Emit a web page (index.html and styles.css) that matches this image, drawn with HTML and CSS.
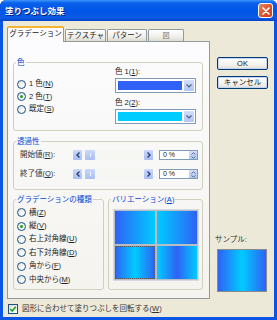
FILE: index.html
```html
<!DOCTYPE html>
<html lang="ja">

<head>
    <meta charset="UTF-8">
    <title>塗りつぶし効果</title>
    <link rel="stylesheet" href="styles.css">
</head>

<body>
    <div class="window">
        <div class="titlebar">
            <span class="title">塗りつぶし効果</span>
            <span class="close-btn">
                <svg width="8" height="8" viewBox="0 0 8 8"><path d="M1 1L7 7M7 1L1 7" stroke="#fff" stroke-width="1.6" stroke-linecap="round"/></svg>
            </span>
        </div>

        <div class="client">
            <div class="main">
                <div class="left">
                    <div class="tabs">
                        <div class="tab active">グラデーション</div>
                        <div class="tab">テクスチャ</div>
                        <div class="tab">パターン</div>
                        <div class="tab tab-pic">図</div>
                    </div>

                    <div class="panel">
                        <fieldset class="group color-group">
                            <legend>色</legend>
                            <div class="color-body">
                                <div class="radio-list">
                                    <label class="radio"><span class="radio-dot"></span><span>1 色(<u>N</u>)</span></label>
                                    <label class="radio"><span class="radio-dot checked"></span><span>2 色(<u>T</u>)</span></label>
                                    <label class="radio"><span class="radio-dot"></span><span>既定(<u>S</u>)</span></label>
                                </div>
                                <div class="pickers">
                                    <div class="field-label">色 1(<u>1</u>):</div>
                                    <div class="dropdown">
                                        <span class="swatch swatch-blue"></span>
                                        <span class="dd-btn"><svg width="6" height="4" viewBox="0 0 6 4"><path d="M0.5 0.5L3 3L5.5 0.5" fill="none" stroke="#4d6185" stroke-width="1.2"/></svg></span>
                                    </div>
                                    <div class="field-label second">色 2(<u>2</u>):</div>
                                    <div class="dropdown">
                                        <span class="swatch swatch-cyan"></span>
                                        <span class="dd-btn"><svg width="6" height="4" viewBox="0 0 6 4"><path d="M0.5 0.5L3 3L5.5 0.5" fill="none" stroke="#4d6185" stroke-width="1.2"/></svg></span>
                                    </div>
                                </div>
                            </div>
                        </fieldset>

                        <fieldset class="group alpha-group">
                            <legend>透過性</legend>
                            <div class="alpha-body">
                                <div class="alpha-row">
                                    <span class="row-label">開始値(<u>R</u>):</span>
                                    <div class="slider">
                                        <span class="sb-btn"><svg width="4" height="6" viewBox="0 0 4 6"><path d="M3.5 0.5L1 3L3.5 5.5" fill="none" stroke="#2c3f6b" stroke-width="1.4"/></svg></span>
                                        <span class="track"><span class="thumb"></span></span>
                                        <span class="sb-btn"><svg width="4" height="6" viewBox="0 0 4 6"><path d="M0.5 0.5L3 3L0.5 5.5" fill="none" stroke="#2c3f6b" stroke-width="1.4"/></svg></span>
                                    </div>
                                    <div class="spin">
                                        <span class="spin-text">0 %</span>
                                        <span class="spin-btn"><svg width="5" height="7" viewBox="0 0 5 7"><path d="M0.5 2.5L2.5 0.8L4.5 2.5M0.5 4.5L2.5 6.2L4.5 4.5" fill="none" stroke="#4d6185" stroke-width="0.9"/></svg></span>
                                    </div>
                                </div>
                                <div class="alpha-row">
                                    <span class="row-label">終了値(<u>Q</u>):</span>
                                    <div class="slider">
                                        <span class="sb-btn"><svg width="4" height="6" viewBox="0 0 4 6"><path d="M3.5 0.5L1 3L3.5 5.5" fill="none" stroke="#2c3f6b" stroke-width="1.4"/></svg></span>
                                        <span class="track"><span class="thumb"></span></span>
                                        <span class="sb-btn"><svg width="4" height="6" viewBox="0 0 4 6"><path d="M0.5 0.5L3 3L0.5 5.5" fill="none" stroke="#2c3f6b" stroke-width="1.4"/></svg></span>
                                    </div>
                                    <div class="spin">
                                        <span class="spin-text">0 %</span>
                                        <span class="spin-btn"><svg width="5" height="7" viewBox="0 0 5 7"><path d="M0.5 2.5L2.5 0.8L4.5 2.5M0.5 4.5L2.5 6.2L4.5 4.5" fill="none" stroke="#4d6185" stroke-width="0.9"/></svg></span>
                                    </div>
                                </div>
                            </div>
                        </fieldset>

                        <div class="bottom-groups">
                            <fieldset class="group type-group">
                                <legend>グラデーションの種類</legend>
                                <div class="type-list">
                                    <label class="radio"><span class="radio-dot"></span><span>横(<u>Z</u>)</span></label>
                                    <label class="radio"><span class="radio-dot checked"></span><span>縦(<u>V</u>)</span></label>
                                    <label class="radio"><span class="radio-dot"></span><span>右上対角線(<u>U</u>)</span></label>
                                    <label class="radio"><span class="radio-dot"></span><span>右下対角線(<u>D</u>)</span></label>
                                    <label class="radio"><span class="radio-dot"></span><span>角から(<u>F</u>)</span></label>
                                    <label class="radio"><span class="radio-dot"></span><span>中央から(<u>M</u>)</span></label>
                                </div>
                            </fieldset>

                            <fieldset class="group variation-group">
                                <legend>バリエーション(<u>A</u>)</legend>
                                <div class="tiles">
                                    <span class="tile tile-1"></span>
                                    <span class="tile tile-2"></span>
                                    <span class="tile tile-3 selected"></span>
                                    <span class="tile tile-4"></span>
                                </div>
                            </fieldset>
                        </div>
                    </div>
                </div>

                <div class="side">
                    <button class="btn">OK</button>
                    <button class="btn">キャンセル</button>
                    <div class="sample-label">サンプル:</div>
                    <div class="sample"></div>
                </div>
            </div>

            <label class="check-row">
                <span class="checkbox"><svg width="8" height="8" viewBox="0 0 8 8"><path d="M1.2 4L3.2 6L6.8 1.8" fill="none" stroke="#21a121" stroke-width="1.6"/></svg></span>
                <span>図形に合わせて塗りつぶしを回転する(<u>W</u>)</span>
            </label>
        </div>
    </div>
</body>

</html>
```

FILE: styles.css
```css
body,
html {
    margin: 0;
    padding: 0;
    background: #ffffff;
}

.window {
    width: 277px;
    height: 320px;
    box-sizing: border-box;
    display: flex;
    flex-direction: column;
    background: #0a55e3;
    border-radius: 6px 6px 0 0;
    padding: 0 3px 3px;
    font-family: "Liberation Sans", "Noto Sans CJK JP", sans-serif;
    font-size: 7.5px;
    line-height: 10px;
    color: #222222;
}

/* title bar */
.titlebar {
    height: 21px;
    margin: 0 -3px;
    padding: 0 5px 0 5px;
    display: flex;
    align-items: center;
    justify-content: space-between;
    border-radius: 6px 6px 0 0;
    background: linear-gradient(to bottom, #3d95ff 0%, #0a61ea 14%, #0055e8 50%, #0a5ae4 85%, #0842c8 100%);
}

.title {
    color: #ffffff;
    font-weight: bold;
    font-size: 8.5px;
    text-shadow: 1px 1px 0 #0a1e80;
}

.close-btn {
    width: 13px;
    height: 13px;
    display: flex;
    align-items: center;
    justify-content: center;
    border: 1px solid #ffffff;
    border-radius: 3px;
    background: linear-gradient(135deg, #e7865f, #d9532e 55%, #c8401e);
    margin-right: -1px;
}

/* dialog body */
.client {
    flex: 1;
    background: #ece9d8;
    padding: 5px 0 0 4px;
    display: flex;
    flex-direction: column;
}

.main {
    display: flex;
}

.left {
    width: 203px;
}

.tabs {
    display: flex;
    align-items: flex-end;
    height: 15px;
}

.tab {
    height: 12px;
    box-sizing: border-box;
    border: 1px solid #919b9c;
    border-bottom: none;
    border-radius: 2px 2px 0 0;
    background: linear-gradient(to bottom, #ffffff, #ecebe6 70%, #dcdad0);
    text-align: center;
    line-height: 11px;
    color: #222222;
    margin-right: 1px;
}

.tab:nth-child(1) { width: 57px; }
.tab:nth-child(2) { width: 41px; }
.tab:nth-child(3) { width: 40px; }
.tab:nth-child(4) { width: 36px; }

.tab.active {
    background: #fcfcfe;
    border-top: 2px solid #f5b431;
    line-height: 12px;
    position: relative;
    z-index: 1;
    margin-bottom: -1px;
    height: 16px;
}

.tab-pic {
    color: #777777;
    font-size: 7px;
}

.panel {
    height: 258px;
    box-sizing: border-box;
    border: 1px solid #919b9c;
    background: linear-gradient(to bottom, #fcfcfe, #f4f3ee);
    padding: 16px 6px 0 5px;
}

/* group boxes */
.group {
    margin: 0;
    padding: 0;
    min-width: 0;
    border: 1px solid #d0d0bf;
    border-radius: 3px;
}

.group legend {
    margin-left: 2px;
    padding: 0 1px;
    line-height: 9px;
    color: #0046d5;
}

.color-body {
    display: flex;
    height: 63px;
}

.radio-list {
    width: 98px;
    padding: 11px 0 0 3px;
}

.radio {
    display: flex;
    align-items: center;
    height: 12.5px;
    gap: 3px;
}

.radio-dot {
    width: 9px;
    height: 9px;
    box-sizing: border-box;
    border: 1px solid #1c5180;
    border-radius: 50%;
    background: radial-gradient(circle at 65% 65%, #ffffff, #dcdcd6);
    display: flex;
    align-items: center;
    justify-content: center;
}

.radio-dot.checked::after {
    content: "";
    width: 3px;
    height: 3px;
    border-radius: 50%;
    background: #21a121;
}

.pickers {
    width: 81px;
}

.field-label {
    height: 10px;
}

.field-label.second {
    margin-top: 5px;
}

.dropdown {
    height: 15px;
    box-sizing: border-box;
    margin-top: 1px;
    border: 1px solid #7f9db9;
    background: #ffffff;
    display: flex;
    padding: 2px 1px 2px 2px;
    gap: 2px;
}

.swatch {
    flex: 1;
}

.swatch-blue {
    background: #2f62f5;
}

.swatch-cyan {
    background: #00ccff;
}

.dd-btn {
    width: 10px;
    margin: -1px 0;
    border-radius: 1px;
    background: linear-gradient(to bottom, #d3dffc, #b1c5f5);
    display: flex;
    align-items: center;
    justify-content: center;
}

/* transparency */
.alpha-group {
    margin-top: 6px;
}

.alpha-body {
    padding: 3px 4px 9px 6px;
}

.alpha-row {
    display: flex;
    align-items: center;
    height: 12px;
}

.alpha-row + .alpha-row {
    margin-top: 7px;
}

.row-label {
    width: 53px;
    color: #333333;
}

.slider {
    width: 80px;
    height: 10px;
    display: flex;
}

.sb-btn {
    width: 9px;
    border-radius: 1px;
    background: linear-gradient(to bottom, #c9d8fc, #a8bff2);
    display: flex;
    align-items: center;
    justify-content: center;
}

.track {
    flex: 1;
    background: #f6f6f2;
    padding-left: 3px;
}

.thumb {
    display: block;
    width: 10px;
    height: 10px;
    border-radius: 1px;
    background-image: repeating-linear-gradient(to right, transparent 0 2px, #eef3ff 2px 3px), linear-gradient(to bottom, #c9d8fc, #a8bff2);
    background-size: 5px 4px, 100% 100%;
    background-position: 3px 3px, 0 0;
    background-repeat: no-repeat;
}

.spin {
    width: 39px;
    height: 10px;
    box-sizing: border-box;
    margin-left: 6px;
    border: 1px solid #7f9db9;
    background: #ffffff;
    display: flex;
    align-items: center;
    justify-content: space-between;
    padding-left: 3px;
}

.spin-text {
    font-size: 7px;
}

.spin-btn {
    width: 8px;
    height: 8px;
    background: linear-gradient(to bottom, #d3dffc, #b1c5f5);
    display: flex;
    align-items: center;
    justify-content: center;
}

/* gradient type and variations */
.bottom-groups {
    display: flex;
    gap: 4px;
    margin-top: 5px;
}

.type-group {
    width: 91px;
    box-sizing: border-box;
}

.type-list {
    padding: 2px 0 3px 3px;
}

.type-list .radio {
    height: 13.4px;
}

.variation-group {
    flex: 1;
}

.tiles {
    display: grid;
    grid-template-columns: 40px 40px;
    grid-template-rows: 33px 33px;
    gap: 2px;
    padding: 1px;
    background: #b9bec6;
    border: 1px solid #d6d9de;
    width: max-content;
    margin: 5px auto 5px;
}

.tile {
    display: block;
    box-sizing: border-box;
}

.tile-1 {
    background: linear-gradient(to right, #2f62f5, #00ccff);
}

.tile-2 {
    background: linear-gradient(to right, #00ccff, #2f62f5);
}

.tile-3 {
    background: linear-gradient(to right, #2f62f5, #00ccff 50%, #2f62f5);
}

.tile-4 {
    background: linear-gradient(to right, #00ccff, #2f62f5 50%, #00ccff);
}

.tile.selected {
    outline: 1px dotted #555555;
    outline-offset: -1px;
}

/* right column */
.side {
    margin-left: 7px;
    padding-top: 31px;
    display: flex;
    flex-direction: column;
    width: 51px;
}

.btn {
    height: 13px;
    width: 51px;
    padding: 0;
    box-sizing: border-box;
    border: 1px solid #003c74;
    border-radius: 2px;
    background: linear-gradient(to bottom, #ffffff, #f3f2ec 60%, #e3e0d5);
    box-shadow: inset 0 0 0 1px #c4d6f7;
    font-family: inherit;
    font-size: 7.5px;
    line-height: 10px;
    color: #222222;
}

.btn + .btn {
    margin-top: 6px;
}

.sample-label {
    margin-top: 146px;
    margin-left: -2px;
    color: #333333;
}

.sample {
    margin-top: 4px;
    width: 50px;
    height: 43px;
    box-sizing: border-box;
    border: 1px solid #8a8a8a;
    background: linear-gradient(to right, #2f62f5, #00ccff 50%, #2f62f5);
}

/* bottom checkbox */
.check-row {
    display: flex;
    align-items: center;
    gap: 4px;
    margin-top: 5px;
    margin-left: 1px;
    color: #333333;
}

.checkbox {
    width: 10px;
    height: 10px;
    box-sizing: border-box;
    border: 1px solid #1c5180;
    background: linear-gradient(135deg, #dcdcd6, #ffffff);
    display: flex;
    align-items: center;
    justify-content: center;
}
```
